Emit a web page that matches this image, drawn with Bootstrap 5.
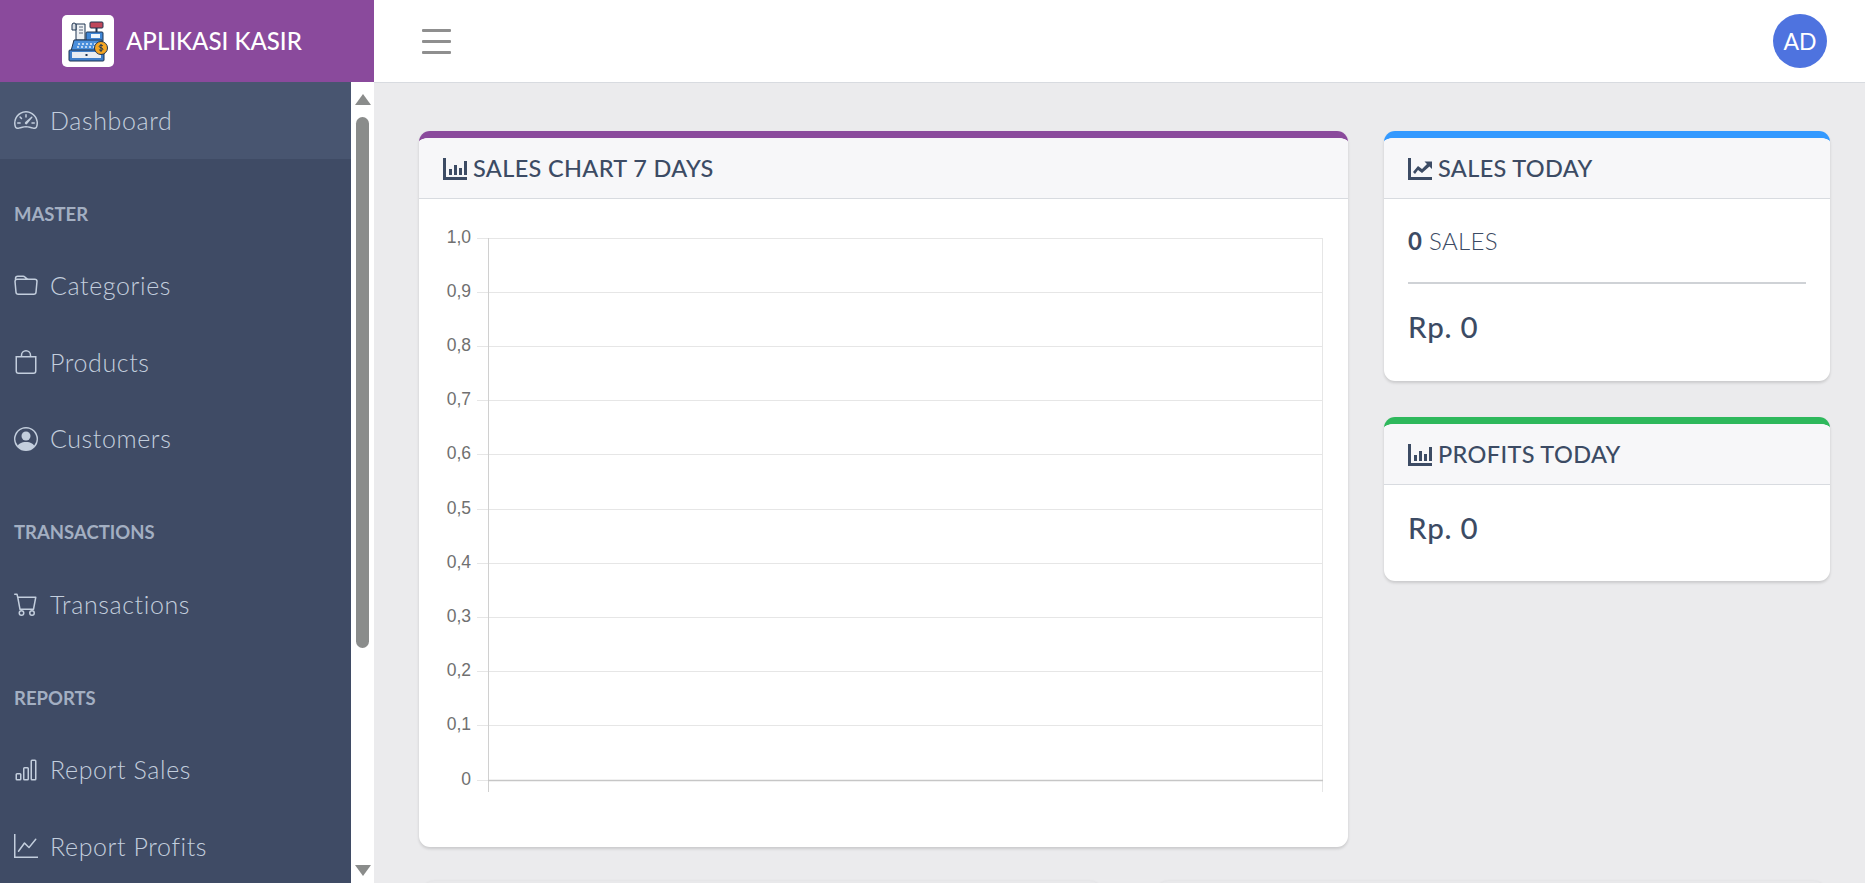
<!DOCTYPE html>
<html lang="en">
<head>
<meta charset="utf-8">
<title>Aplikasi Kasir</title>
<link href="https://cdn.jsdelivr.net/npm/bootstrap@5.3.0/dist/css/bootstrap.min.css" rel="stylesheet">
<style>
html,body{height:883px;overflow:hidden}
body{font-family:"Lato","Noto Sans",sans-serif;background:#ebebed;color:#3c4b64;width:1865px}
.top-bar{height:82px;background:#fff;padding:0}
.brand-box{width:374px;height:82px;background:#8a4a9c;color:#fff;font-size:24px;font-weight:500;padding-left:62px;gap:12px}
.logo-box{width:52px;height:52px;background:#fff;border-radius:5px}
.burger{width:29px;margin-left:47.5px;gap:8px}
.burger i{display:block;height:3px;background:#8f8f8f;border-radius:1px}
.avatar{width:54px;height:54px;background:#4e73df;color:#fff;font-size:23px;margin-right:38px}
.side-wrap{width:374px;height:801px;flex:none;background:#fff}
.side-menu{width:351px;background:#3f4b65;overflow:hidden}
.side-link{height:76.6px;padding:0 0 0 14px;color:#c3cedd;font-size:25px;font-weight:300;letter-spacing:.6px;gap:12px;text-decoration:none}
.side-link svg{width:24px;height:24px;flex:none;fill:currentColor}
.side-link.is-on{background:#485570}
.side-head{height:88.8px;padding:40px 0 0 14px;color:#a3afc2;font-size:18.500px;font-weight:700;line-height:31px}
.track{width:23px}
.arrow-up{width:0;height:0;border-left:8px solid transparent;border-right:8px solid transparent;border-bottom:11px solid #8a8c8b;margin:12px auto 0}
.arrow-down{width:0;height:0;border-left:8px solid transparent;border-right:8px solid transparent;border-top:11px solid #8a8c8b;margin:auto auto 7px}
.thumb{width:13px;height:531px;background:#8a8c8b;border-radius:7px;margin:12px 0 0 5px}
.content-area{padding:48px 35px 0 45px;height:801px;overflow:hidden;border-top:1px solid #d8dbe0}
.sheet{border:0;border-radius:11px;box-shadow:0 2px 3px rgba(0,0,0,.14);background:#fff;overflow:hidden;border-top:7px solid}
.sheet .card-header{background:#f7f7f9;border-bottom:1px solid #d8dbe0;border-radius:0;padding:1px 24px 0;height:61px;font-size:23.500px;font-weight:500;letter-spacing:.35px;gap:6px;color:#3c4b64}
.sheet .card-header svg{width:24px;height:24px;fill:currentColor;flex:none}
.sheet .card-body{padding:0}
.edge-purple{border-top-color:#8a4a9c}
.edge-blue{border-top-color:#3399ff}
.edge-green{border-top-color:#2eb85c}
.chart-sheet{width:929px;height:716px}
.right-col{width:446px;margin-left:36px;gap:36px}
.sales-sheet{height:250px}
.profit-sheet{height:164px}
.count-line{font-size:24px;font-weight:300;letter-spacing:.3px;padding:26px 24px 0;line-height:32px}
.count-line b{font-weight:700}
.rule{height:2px;background:#cfd2d6;margin:25px 24px 0}
.money{font-size:29.500px;font-weight:500;letter-spacing:.8px;padding:0 24px;line-height:40px;margin-top:23px}
.next-row{margin:34px 5px 0 4px;gap:56px}
.next-sheet{height:60px;background:#e9e9eb;border-radius:11px;box-shadow:0 0 3px rgba(0,0,0,.06)}
.next-a{width:678px}
.next-b{width:668px}
.chart-svg{display:block}
.chart-svg text{font-family:"Liberation Sans",Arial,sans-serif;font-size:17.500px;fill:#707070;text-anchor:end}
</style>
</head>
<body>
<nav class="navbar top-bar d-flex flex-nowrap justify-content-between">
  <div class="brand-box d-flex align-items-center">
    <div class="logo-box d-flex align-items-center justify-content-center">
      <svg width="42" height="42" viewBox="0 0 42 42">
        <rect x="23" y="2" width="13" height="6" rx="1" fill="#c0475a" stroke="#1f3450" stroke-width="1"/>
        <rect x="28.500" y="8" width="2" height="5" fill="#1f3450"/>
        <path d="M9 4h9v16H9z" fill="#eef1f4" stroke="#1f3450" stroke-width="1"/>
        <path d="M5 5a2 2 0 0 1 4 0v5H5z" fill="#d8dde3" stroke="#1f3450" stroke-width="1"/>
        <path d="M12 7h4M12 10h4M12 13h4" stroke="#59677b" stroke-width="1.200"/>
        <rect x="19" y="12" width="17" height="10" rx="1" fill="#3f86d6" stroke="#1f3450" stroke-width="1"/>
        <rect x="24" y="14" width="9" height="4" fill="#eef6fc"/>
        <path d="M7 20h28l3 11H4z" fill="#4a8fdc" stroke="#1f3450" stroke-width="1"/>
        <path d="M11 24h2m2 0h2m2 0h2m2 0h2m2 0h2M10 27h2m2 0h2m2 0h2m2 0h2m2 0h2" stroke="#e3eef8" stroke-width="1.500"/>
        <rect x="2" y="30" width="35" height="11" rx="1" fill="#3f7fc9" stroke="#1f3450" stroke-width="1"/>
        <rect x="5" y="32" width="29" height="6" fill="#e8edf2"/>
        <rect x="18.500" y="34" width="2" height="2" fill="#1f3450"/>
        <circle cx="34" cy="28" r="6.500" fill="#f5a623" stroke="#1f3450" stroke-width="1"/>
        <path d="M36 26c-.5-1-3.600-1.300-3.800.4-.2 1.800 3.800 1 3.700 2.900-.1 1.500-3.400 1.300-4 .2M34 24v8" fill="none" stroke="#1f3450" stroke-width="1"/>
      </svg>
    </div>
    <span>APLIKASI KASIR</span>
  </div>
  <div class="burger d-flex flex-column me-auto"><i></i><i></i><i></i></div>
  <div class="avatar rounded-circle d-flex align-items-center justify-content-center">AD</div>
</nav>
<div class="d-flex">
  <aside class="side-wrap d-flex">
    <div class="side-menu">
      <a class="side-link is-on d-flex align-items-center" href="#"><svg viewBox="0 0 16 16"><path d="M8 4a.5.5 0 0 1 .5.5V6a.5.5 0 0 1-1 0V4.500A.5.5 0 0 1 8 4zM3.732 5.732a.5.5 0 0 1 .707 0l.915.914a.5.5 0 1 1-.708.708l-.914-.915a.5.5 0 0 1 0-.707zM2 10a.5.5 0 0 1 .5-.5h1.586a.5.5 0 0 1 0 1H2.500A.5.5 0 0 1 2 10zm9.500 0a.5.5 0 0 1 .5-.5h1.500a.5.5 0 0 1 0 1H12a.5.5 0 0 1-.5-.5zm.754-4.246a.389.389 0 0 0-.527-.02L7.547 9.310a.91.91 0 1 0 1.302 1.258l3.434-4.297a.389.389 0 0 0-.029-.518z"/><path fill-rule="evenodd" d="M0 10a8 8 0 1 1 15.547 2.661c-.442 1.253-1.845 1.602-2.932 1.250C11.309 13.488 9.475 13 8 13c-1.474 0-3.310.488-4.615.911-1.087.352-2.490.003-2.932-1.250A7.988 7.988 0 0 1 0 10zm8-7a7 7 0 0 0-6.603 9.329c.203.575.923.876 1.680.630C4.397 12.533 6.358 12 8 12s3.604.532 4.923.960c.757.245 1.477-.056 1.680-.631A7 7 0 0 0 8 3z"/></svg><span>Dashboard</span></a>
      <div class="side-head">MASTER</div>
      <a class="side-link d-flex align-items-center" href="#"><svg viewBox="0 0 16 16"><path d="M.54 3.870.5 3a2 2 0 0 1 2-2h3.672a2 2 0 0 1 1.414.586l.828.828A2 2 0 0 0 9.828 3h3.982a2 2 0 0 1 1.992 2.181l-.637 7A2 2 0 0 1 13.174 14H2.826a2 2 0 0 1-1.991-1.819l-.637-7a1.990 1.990 0 0 1 .342-1.310zM2.190 4a1 1 0 0 0-.996 1.090l.637 7a1 1 0 0 0 .995.91h10.348a1 1 0 0 0 .995-.91l.637-7A1 1 0 0 0 13.810 4H2.190zm4.690-1.707A1 1 0 0 0 6.172 2H2.500a1 1 0 0 0-1 .981l.006.139C1.720 3.042 1.950 3 2.190 3h5.396l-.707-.707z"/></svg><span>Categories</span></a>
      <a class="side-link d-flex align-items-center" href="#"><svg viewBox="0 0 16 16"><path d="M8 1a2.500 2.500 0 0 1 2.500 2.500V4h-5v-.5A2.500 2.500 0 0 1 8 1zm3.500 3v-.5a3.500 3.500 0 1 0-7 0V4H1v10a2 2 0 0 0 2 2h10a2 2 0 0 0 2-2V4h-3.500zM2 5h12v9a1 1 0 0 1-1 1H3a1 1 0 0 1-1-1V5z"/></svg><span>Products</span></a>
      <a class="side-link d-flex align-items-center" href="#"><svg viewBox="0 0 16 16"><path d="M11 6a3 3 0 1 1-6 0 3 3 0 0 1 6 0z"/><path fill-rule="evenodd" d="M0 8a8 8 0 1 1 16 0A8 8 0 0 1 0 8zm8-7a7 7 0 0 0-5.468 11.370C3.242 11.226 4.805 10 8 10s4.757 1.225 5.468 2.370A7 7 0 0 0 8 1z"/></svg><span>Customers</span></a>
      <div class="side-head">TRANSACTIONS</div>
      <a class="side-link d-flex align-items-center" href="#"><svg viewBox="0 0 16 16"><path d="M0 1.500A.5.5 0 0 1 .5 1H2a.5.5 0 0 1 .485.379L2.890 3H14.500a.5.5 0 0 1 .491.592l-1.500 8A.5.5 0 0 1 13 12H4a.5.5 0 0 1-.491-.408L2.010 3.607 1.610 2H.5a.5.5 0 0 1-.5-.5zM3.102 4l1.313 7h8.170l1.313-7H3.102zM5 12a2 2 0 1 0 0 4 2 2 0 0 0 0-4zm7 0a2 2 0 1 0 0 4 2 2 0 0 0 0-4zm-7 1a1 1 0 1 1 0 2 1 1 0 0 1 0-2zm7 0a1 1 0 1 1 0 2 1 1 0 0 1 0-2z"/></svg><span>Transactions</span></a>
      <div class="side-head">REPORTS</div>
      <a class="side-link d-flex align-items-center" href="#"><svg viewBox="0 0 16 16"><path d="M4 11H2v3h2v-3zm5-4H7v7h2V7zm5-5v12h-2V2h2zm-2-1a1 1 0 0 0-1 1v12a1 1 0 0 0 1 1h2a1 1 0 0 0 1-1V2a1 1 0 0 0-1-1h-2zM6 7a1 1 0 0 1 1-1h2a1 1 0 0 1 1 1v7a1 1 0 0 1-1 1H7a1 1 0 0 1-1-1V7zm-5 4a1 1 0 0 1 1-1h2a1 1 0 0 1 1 1v3a1 1 0 0 1-1 1H2a1 1 0 0 1-1-1v-3z"/></svg><span>Report Sales</span></a>
      <a class="side-link d-flex align-items-center" href="#"><svg viewBox="0 0 16 16"><path fill-rule="evenodd" d="M0 0h1v15h15v1H0V0Zm14.817 3.113a.5.5 0 0 1 .07.704l-4.500 5.500a.5.5 0 0 1-.74.037L7.060 6.767l-3.656 5.027a.5.5 0 0 1-.808-.588l4-5.500a.5.5 0 0 1 .758-.06l2.609 2.610 4.150-5.073a.5.5 0 0 1 .704-.07Z"/></svg><span>Report Profits</span></a>
    </div>
    <div class="track d-flex flex-column"><div class="arrow-up"></div><div class="thumb"></div><div class="arrow-down"></div></div>
  </aside>
  <main class="content-area flex-grow-1">
    <div class="d-flex align-items-start">
      <div class="card sheet chart-sheet edge-purple flex-none">
        <div class="card-header d-flex align-items-center"><svg viewBox="0 0 24 24"><path d="M0 1h3v19h21v3H0z"/><path d="M6 12h3v6H6zM11 8h3v10h-3zM16 11h3v7h-3zM21 4h3v14h-3z"/></svg><span>SALES CHART 7 DAYS</span></div>
        <div class="card-body">
          <svg class="chart-svg" width="929" height="648" viewBox="0 0 929 648">
            <g fill="none" stroke="#e6e6e6" stroke-width="1">
              <path d="M58 39.500H904M58 93.500H904M58 147.500H904M58 201.500H904M58 255.500H904M58 310.500H904M58 364.500H904M58 418.500H904M58 472.500H904M58 526.500H904"/>
              <path d="M58 581.500H70"/>
              <path d="M903.500 39V593"/>
            </g>
            <path d="M69.500 39V593" stroke="#d0d0d0" fill="none"/>
            <path d="M69 581.500H904" stroke="#c6c6c6" stroke-width="1.500" fill="none"/>
            <text x="52" y="44">1,0</text><text x="52" y="98">0,9</text><text x="52" y="152">0,8</text><text x="52" y="206">0,7</text><text x="52" y="260">0,6</text><text x="52" y="315">0,5</text><text x="52" y="369">0,4</text><text x="52" y="423">0,3</text><text x="52" y="477">0,2</text><text x="52" y="531">0,1</text><text x="52" y="586">0</text>
          </svg>
        </div>
      </div>
      <div class="right-col d-flex flex-column flex-none">
        <div class="card sheet sales-sheet edge-blue">
          <div class="card-header d-flex align-items-center"><svg viewBox="0 0 24 24"><path d="M0 1h3v19h21v3H0z"/><path d="M5 15l5-6 4 3 5-5-2.500-2.500H24V12l-2.500-2.500L14 16l-4-3-3 4z"/></svg><span>SALES TODAY</span></div>
          <div class="card-body">
            <div class="count-line"><b>0</b> SALES</div>
            <div class="rule"></div>
            <div class="money">Rp. 0</div>
          </div>
        </div>
        <div class="card sheet profit-sheet edge-green">
          <div class="card-header d-flex align-items-center"><svg viewBox="0 0 24 24"><path d="M0 1h3v19h21v3H0z"/><path d="M6 12h3v6H6zM11 8h3v10h-3zM16 11h3v7h-3zM21 4h3v14h-3z"/></svg><span>PROFITS TODAY</span></div>
          <div class="card-body"><div class="money">Rp. 0</div></div>
        </div>
      </div>
    </div>
    <div class="d-flex next-row">
      <div class="next-sheet next-a"></div>
      <div class="next-sheet next-b"></div>
    </div>
  </main>
</div>
</body>
</html>
